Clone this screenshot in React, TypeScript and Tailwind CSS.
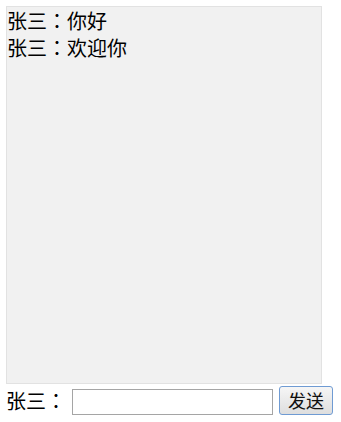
import { useState } from "react";

const messages = [
  { user: "张三", text: "你好" },
  { user: "张三", text: "欢迎你" },
];

// full-width colon, centred in its box like the reference's YaHei rendering
function Colon() {
  return (
    <span style={{ fontFamily: '"Noto Sans CJK TC", "Noto Sans CJK SC", sans-serif' }}>：</span>
  );
}

export default function App() {
  const [draft, setDraft] = useState("");

  return (
    <div
      className="pl-[6px] pt-[6px] text-black"
      style={{ fontFamily: '"Microsoft YaHei", "Noto Sans CJK SC", sans-serif' }}
    >
      {/* message list */}
      <div className="w-[316px] h-[378px] border border-[#e2e2e2] bg-[#f1f1f1] text-[20px] leading-[27px]">
        {messages.map((m, i) => (
          <div key={i}>
            {m.user}
            <Colon />
            {m.text}
          </div>
        ))}
      </div>

      {/* input row */}
      <div className="flex items-center h-[32px]">
        <span className="text-[20px] leading-[27px] w-[60px]">
          张三
          <Colon />
        </span>
        <input
          value={draft}
          onChange={(e) => setDraft(e.target.value)}
          className="ml-[6px] mt-[3px] w-[201px] h-[26px] border border-[#a5a5a5] bg-white outline-none px-1 text-[14px]"
        />
        <button className="ml-[6px] w-[54px] h-[29px] border border-[#6f9bd3] rounded-[3px] bg-gradient-to-b from-[#f6f6f6] to-[#dedede] text-[18px] leading-none text-[#111]">
          发送
        </button>
      </div>
    </div>
  );
}
